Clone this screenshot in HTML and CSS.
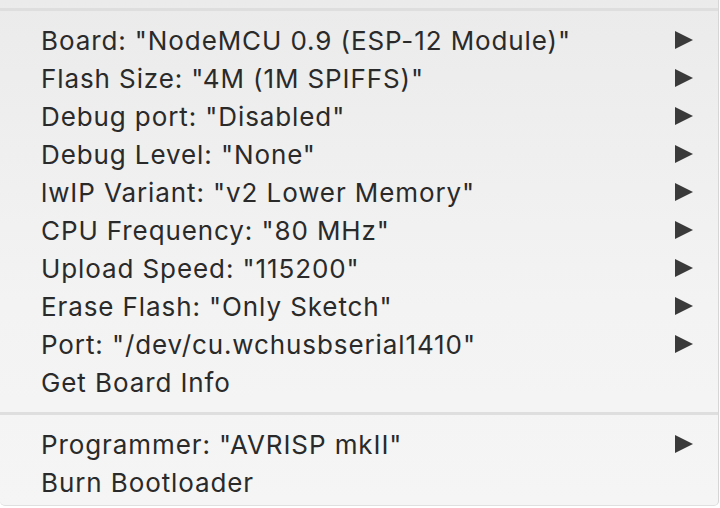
FILE: index.html
```html
<!DOCTYPE html>
<html>
<head>
<meta charset="utf-8">
<link rel="stylesheet" href="styles.css">
</head>
<body>
<div class="menu">
  <div class="sep sep-top"></div>
  <div class="group">
    <div class="item"><span class="label">Board: "NodeMCU 0.9 (ESP-12 Module)"</span><span class="arrow"></span></div>
    <div class="item"><span class="label">Flash Size: "4M (1M SPIFFS)"</span><span class="arrow"></span></div>
    <div class="item"><span class="label">Debug port: "Disabled"</span><span class="arrow"></span></div>
    <div class="item"><span class="label">Debug Level: "None"</span><span class="arrow"></span></div>
    <div class="item"><span class="label">lwIP Variant: "v2 Lower Memory"</span><span class="arrow"></span></div>
    <div class="item"><span class="label">CPU Frequency: "80 MHz"</span><span class="arrow"></span></div>
    <div class="item"><span class="label">Upload Speed: "115200"</span><span class="arrow"></span></div>
    <div class="item"><span class="label">Erase Flash: "Only Sketch"</span><span class="arrow"></span></div>
    <div class="item"><span class="label">Port: "/dev/cu.wchusbserial1410"</span><span class="arrow"></span></div>
    <div class="item"><span class="label">Get Board Info</span></div>
  </div>
  <div class="sep"></div>
  <div class="group">
    <div class="item"><span class="label">Programmer: "AVRISP mkII"</span><span class="arrow"></span></div>
    <div class="item"><span class="label">Burn Bootloader</span></div>
  </div>
</div>
</body>
</html>
```

FILE: styles.css
```css
html, body {
  margin: 0;
  padding: 0;
  background: #ffffff;
}
body {
  width: 720px;
  height: 508px;
  overflow: hidden;
}
.menu {
  width: 719px;
  height: 506px;
  box-sizing: border-box;
  border-right: 1px solid #d6d6d6;
  border-bottom: 1px solid #e0e0e0;
  border-radius: 0 0 5px 5px;
  background: linear-gradient(#ebebeb, #f3f3f3 60%, #f5f5f5);
  padding-top: 8px;
  font-family: Inter, "Liberation Sans", Arial, sans-serif;
  font-size: 26px;
  letter-spacing: 0.9px;
  color: #2a2a2a;
  display: flex;
  flex-direction: column;
}
.sep {
  height: 3px;
  background: #dedede;
  margin: 11px 0 10px;
}
.sep-top {
  margin: 0 0 10px;
}
.group {
  display: flex;
  flex-direction: column;
}
.item {
  height: 38px;
  display: flex;
  align-items: center;
  justify-content: space-between;
  padding-left: 41px;
  padding-right: 25px;
}
.label {
  white-space: nowrap;
}
.arrow {
  width: 0;
  height: 0;
  border-top: 9.5px solid transparent;
  border-bottom: 9.5px solid transparent;
  border-left: 18px solid #3a3a3a;
}
```
